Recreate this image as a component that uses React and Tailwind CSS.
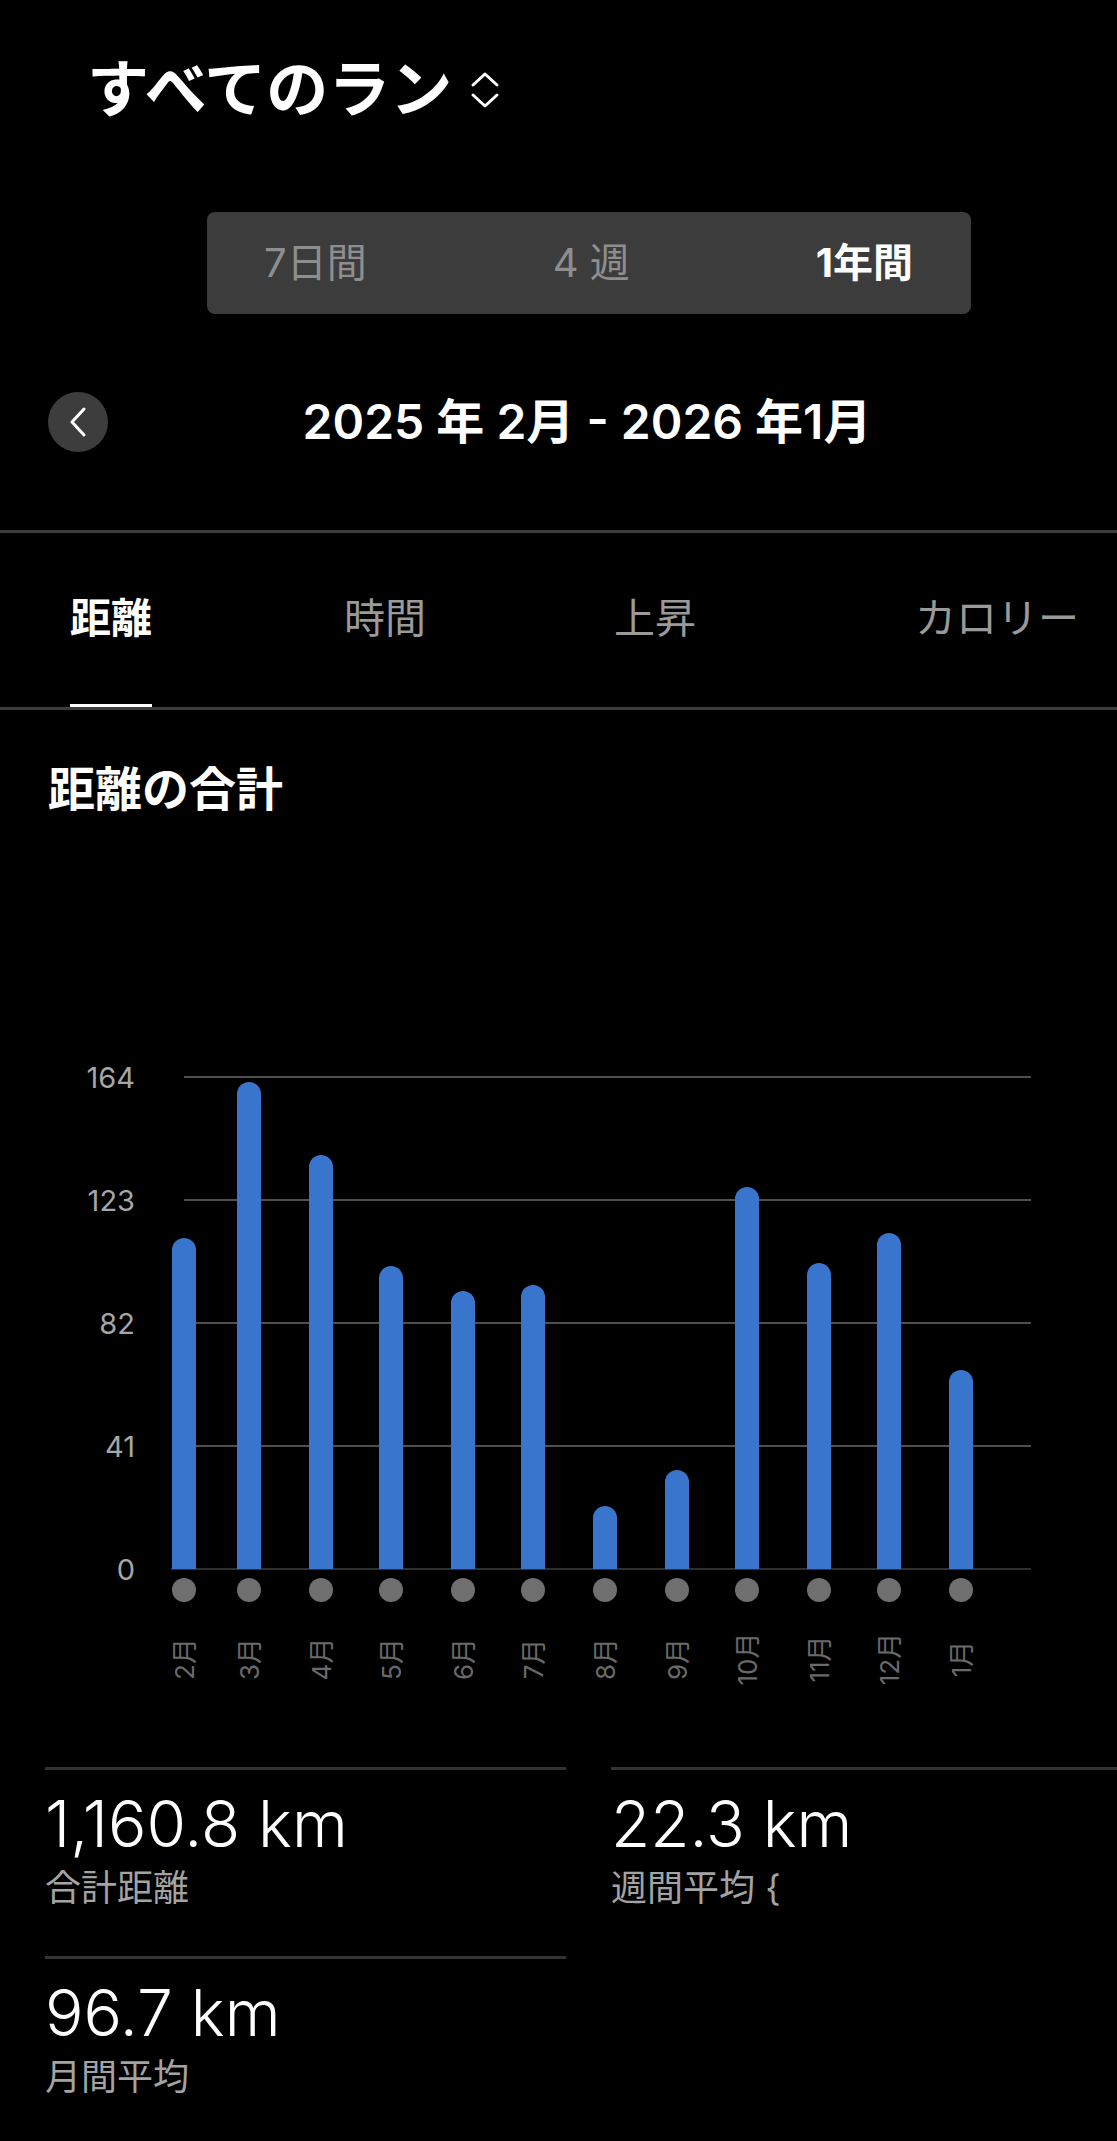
import React from 'react';

const bars = [
  { m: '2月', x: 184, top: 1238 },
  { m: '3月', x: 249, top: 1082 },
  { m: '4月', x: 321, top: 1155 },
  { m: '5月', x: 391, top: 1266 },
  { m: '6月', x: 463, top: 1291 },
  { m: '7月', x: 533, top: 1285 },
  { m: '8月', x: 605, top: 1506 },
  { m: '9月', x: 677, top: 1470 },
  { m: '10月', x: 747, top: 1187 },
  { m: '11月', x: 819, top: 1263 },
  { m: '12月', x: 889, top: 1233 },
  { m: '1月', x: 961, top: 1370 },
];

const ticks = [
  { v: '164', y: 47 },
  { v: '123', y: 170 },
  { v: '82', y: 293 },
  { v: '41', y: 416 },
  { v: '0', y: 539 },
];

const BASE = 539;

function barPath(cx, top) {
  const r = 12;
  const t = top - 1030;
  return `M${cx - r} ${BASE} V${t + r} A${r} ${r} 0 0 1 ${cx + r} ${t + r} V${BASE} Z`;
}

const Chart = () => (
  <svg width="1117" height="680" viewBox="0 0 1117 680" className="block">
    {ticks.map((t) => (
      <g key={t.v}>
        <line
          x1={t.v === '0' ? 171 : 184}
          x2="1031"
          y1={t.y}
          y2={t.y}
          stroke={t.v === '0' ? '#3f3f3f' : '#4f4f4f'}
          strokeWidth={t.v === '0' ? 1.5 : 2}
        />
        <text x="135" y={t.y} textAnchor="end" dominantBaseline="central" fill="#a6a6a6" fontSize="29">
          {t.v}
        </text>
      </g>
    ))}
    {bars.map((b) => (
      <g key={b.m}>
        <path d={barPath(b.x, b.top)} fill="#3a75cd" />
        <circle cx={b.x} cy="560" r="12" fill="#6f6f6f" />
        <text
          transform={`translate(${b.x} 629) rotate(-90)`}
          textAnchor="middle"
          dominantBaseline="central"
          fill="#6a6a6a"
          fontSize="26"
        >
          {b.m}
        </text>
      </g>
    ))}
  </svg>
);

const Stat = ({ value, label }) => (
  <div className="h-[189px] border-t-[3px] border-[#333333] pt-[22px]">
    <div className="text-[64px] leading-none font-light text-white">{value}</div>
    <div className="mt-[14px] text-[36px] leading-none text-[#a3a3a3]">{label}</div>
  </div>
);

export default function App() {
  const tabs = [
    { label: '距離', w: 'w-[274px]', active: true },
    { label: '時間', w: 'w-[270px]' },
    { label: '上昇', w: 'w-[301px]' },
    { label: 'カロリー', w: 'w-auto' },
  ];

  return (
    <div className="w-[1117px] min-h-[2141px] bg-black text-white overflow-hidden font-['Inter','Noto_Sans_CJK_JP',sans-serif]">
      {/* header */}
      <div className="pt-[59px] pl-[87px] flex items-center gap-[18px]">
        <h1 className="text-[62px] leading-none font-bold">すべてのラン</h1>
        <svg width="30" height="38" viewBox="0 0 30 38" fill="none" stroke="white" strokeWidth="3" strokeLinecap="round" strokeLinejoin="round">
          <path d="M3 14 L15 3 L27 14" />
          <path d="M3 24 L15 35 L27 24" />
        </svg>
      </div>

      {/* period selector */}
      <div className="mt-[91px] ml-[207px] w-[764px] h-[102px] rounded-[8px] bg-[#3c3c3c] flex items-center justify-between pl-[57px] pr-[58px] text-[40px] leading-none">
        <span className="text-[#8e8e8e]">7日間</span>
        <span className="text-[#8e8e8e]">4 週</span>
        <span className="font-bold text-white">1年間</span>
      </div>

      {/* date range */}
      <div className="mt-[78px] h-[60px] pl-[48px] pr-[51px] flex items-center">
        <div className="w-[60px] h-[60px] rounded-full bg-[#3d3d3d] flex items-center justify-center">
          <svg width="18" height="30" viewBox="0 0 18 30" fill="none" stroke="white" strokeWidth="3" strokeLinecap="round" strokeLinejoin="round">
            <path d="M15 2 L3 15 L15 28" />
          </svg>
        </div>
        <div className="flex-1 text-center text-[48px] leading-none font-semibold">2025 年 2月 - 2026 年1月</div>
      </div>

      <div className="mt-[78px] h-[3px] bg-[#3d3d3d]" />

      {/* metric tabs */}
      <div className="h-[177px] border-b-[3px] border-[#3d3d3d] flex pl-[70px] text-[41px] leading-none">
        {tabs.map((t) => (
          <div key={t.label} className={`${t.w} h-full`}>
            <div
              className={`inline-flex h-full items-center ${
                t.active ? 'border-b-[3px] border-white text-white font-semibold' : 'border-b-[3px] border-transparent text-[#9a9a9a]'
              }`}
            >
              {t.label}
            </div>
          </div>
        ))}
      </div>

      {/* section */}
      <h2 className="mt-[55px] pl-[48px] text-[47px] leading-none font-bold">距離の合計</h2>

      <div className="mt-[218px]">
        <Chart />
      </div>

      {/* stats */}
      <div className="mt-[57px] pl-[45px] grid grid-cols-[521px_1fr] gap-x-[45px]">
        <Stat value="1,160.8 km" label="合計距離" />
        <Stat value="22.3 km" label="週間平均 {" />
        <Stat value="96.7 km" label="月間平均" />
      </div>
    </div>
  );
}
